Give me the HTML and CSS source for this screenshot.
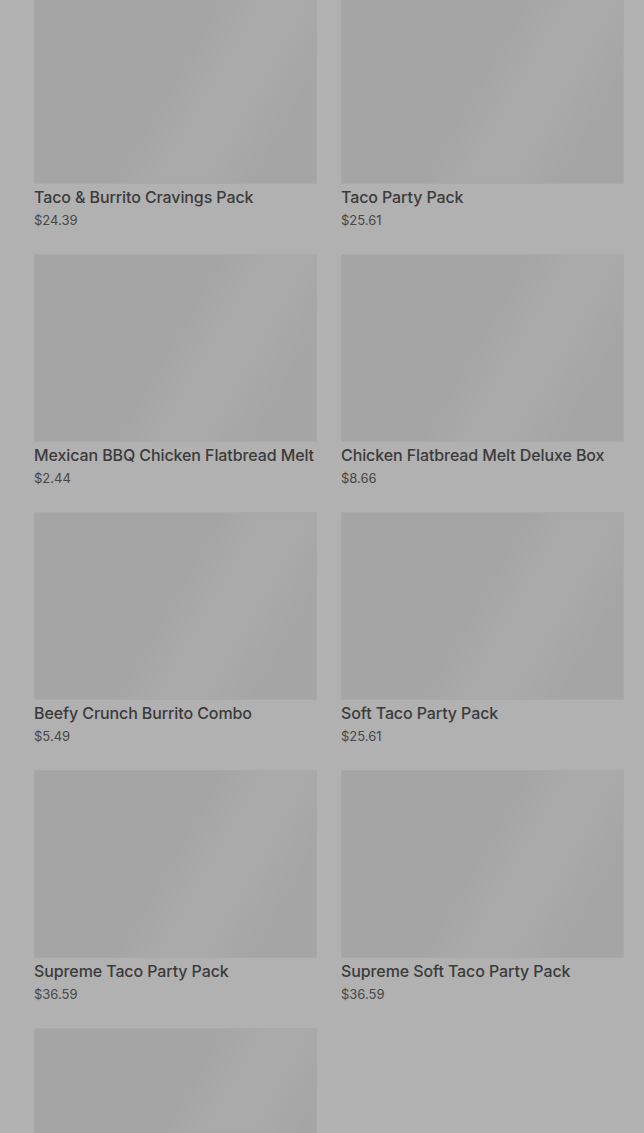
FILE: index.html
```html
<!DOCTYPE html>
<html lang="en">
<head>
    <meta charset="UTF-8">
    <meta name="viewport" content="width=device-width, initial-scale=1.0">
    <title>Menu</title>
    <link rel="stylesheet" href="styles.css">
</head>
<body>
    <div class="grid">
        <div class="card">
            <div class="thumb"></div>
            <div class="name">Taco &amp; Burrito Cravings Pack</div>
            <div class="price">$24.39</div>
        </div>
        <div class="card">
            <div class="thumb"></div>
            <div class="name">Taco Party Pack</div>
            <div class="price">$25.61</div>
        </div>
        <div class="card">
            <div class="thumb"></div>
            <div class="name">Mexican BBQ Chicken Flatbread Melt</div>
            <div class="price">$2.44</div>
        </div>
        <div class="card">
            <div class="thumb"></div>
            <div class="name">Chicken Flatbread Melt Deluxe Box</div>
            <div class="price">$8.66</div>
        </div>
        <div class="card">
            <div class="thumb"></div>
            <div class="name">Beefy Crunch Burrito Combo</div>
            <div class="price">$5.49</div>
        </div>
        <div class="card">
            <div class="thumb"></div>
            <div class="name">Soft Taco Party Pack</div>
            <div class="price">$25.61</div>
        </div>
        <div class="card">
            <div class="thumb"></div>
            <div class="name">Supreme Taco Party Pack</div>
            <div class="price">$36.59</div>
        </div>
        <div class="card">
            <div class="thumb"></div>
            <div class="name">Supreme Soft Taco Party Pack</div>
            <div class="price">$36.59</div>
        </div>
        <div class="card">
            <div class="thumb"></div>
        </div>
    </div>
</body>
</html>
```
FILE: styles.css
```css
html, body {
    margin: 0;
    padding: 0;
    height: 100%;
    overflow: hidden;
}
body {
    font-family: 'Inter', 'Roboto', sans-serif;
    background-color: #b1b1b1;
    color: #3c3c3c;
}
.grid {
    display: grid;
    grid-template-columns: 283px 283px;
    column-gap: 24px;
    row-gap: 25px;
    padding: 0 20px 0 34px;
    margin-top: -4px;
}
.thumb {
    height: 186px;
    border: 1px solid #a9a9a9;
    background-color: #a5a5a5;
    background-image: linear-gradient(120deg, rgba(255,255,255,0) 48%, rgba(255,255,255,0.05) 58%, rgba(255,255,255,0.05) 72%, rgba(255,255,255,0) 84%);
}
.name {
    margin-top: 3px;
    font-size: 16px;
    font-weight: 500;
    line-height: 20px;
    letter-spacing: -0.1px;
    white-space: nowrap;
    color: #3b3b3b;
}
.price {
    margin-top: 4px;
    font-size: 13px;
    line-height: 18px;
    color: #474747;
}
```
